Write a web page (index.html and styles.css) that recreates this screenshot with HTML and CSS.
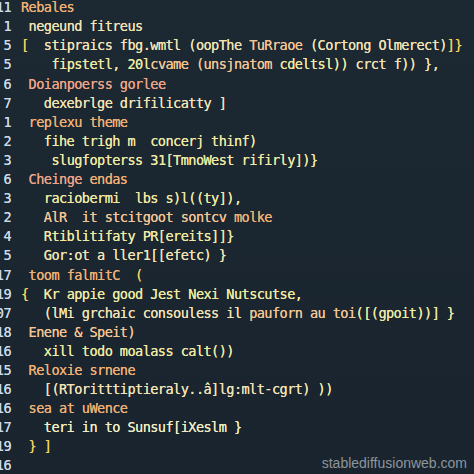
FILE: index.html
```html
<!DOCTYPE html>
<html>
<head>
<meta charset="utf-8">
<link rel="stylesheet" href="styles.css">
</head>
<body>
<div class="editor">
  <div class="line"><span class="ln">11</span><span class="code"><span class="o">Rebales</span></span></div>
  <div class="line"><span class="ln">1</span><span class="code"> <span class="c">negeund fitreus</span></span></div>
  <div class="line"><span class="ln">5</span><span class="code"><span class="b">[</span>  <span class="c">stipraics fbg.wmtl (oopThe </span><span class="p">TuRraoe</span> <span class="c">(Cortong Olmerect)</span><span class="b">]}</span></span></div>
  <div class="line"><span class="ln">5</span><span class="code">    <span class="y">fipstetl, 20l</span><span class="p">cvame (unsjnatom</span> <span class="y">cdeltsl))</span> <span class="c">crct f))</span> <span class="c">},</span></span></div>
  <div class="line"><span class="ln">6</span><span class="code"> <span class="s">Doianpoerss gorlee</span></span></div>
  <div class="line"><span class="ln">7</span><span class="code">   <span class="c">dexebrlge drifilicatty ]</span></span></div>
  <div class="line"><span class="ln">1</span><span class="code"> <span class="o">replexu theme</span></span></div>
  <div class="line"><span class="ln">2</span><span class="code">   <span class="y">fihe trigh m  concerj thinf)</span></span></div>
  <div class="line"><span class="ln">3</span><span class="code">    <span class="y">slugfopterss 31[TmnoWest rifirly])}</span></span></div>
  <div class="line"><span class="ln">6</span><span class="code"> <span class="s">Cheinge</span> <span class="o">endas</span></span></div>
  <div class="line"><span class="ln">3</span><span class="code">   <span class="y">raciobermi  lbs s)l((ty]),</span></span></div>
  <div class="line"><span class="ln">2</span><span class="code">   <span class="p">AlR  it stcitgoot sontcv </span><span class="o">molke</span></span></div>
  <div class="line"><span class="ln">4</span><span class="code">   <span class="y">Rtiblitifaty PR[ereits]]}</span></span></div>
  <div class="line"><span class="ln">5</span><span class="code">   <span class="c">Gor:ot a ller1[[efetc) }</span></span></div>
  <div class="line"><span class="ln">17</span><span class="code"> <span class="o">toom falmitC</span>  <span class="b">(</span></span></div>
  <div class="line"><span class="ln">19</span><span class="code"><span class="b">{</span>  <span class="y">Kr appie good Jest Nexi Nutscutse,</span></span></div>
  <div class="line"><span class="ln">07</span><span class="code">   <span class="c">(lMi grchaic consouless il </span><span class="p">pauforn au toi</span><span class="y">([(gpoit))] }</span></span></div>
  <div class="line"><span class="ln">18</span><span class="code"> <span class="p">Enene &amp; Speit)</span></span></div>
  <div class="line"><span class="ln">16</span><span class="code">   <span class="y">xill todo moalass calt())</span></span></div>
  <div class="line"><span class="ln">15</span><span class="code"> <span class="o">Reloxie srnene</span></span></div>
  <div class="line"><span class="ln">16</span><span class="code">   <span class="c">[(RToritttiptieraly..â]lg:mlt-cgrt)</span> <span class="y">))</span></span></div>
  <div class="line"><span class="ln">16</span><span class="code"> <span class="o">sea at uWence</span></span></div>
  <div class="line"><span class="ln">17</span><span class="code">   <span class="w">teri in to Sunsuf[iXeslm }</span></span></div>
  <div class="line"><span class="ln">19</span><span class="code"> <span class="b">} ]</span></span></div>
  <div class="line"><span class="ln">16</span><span class="code"></span></div>
</div>
<div class="watermark">stablediffusionweb.com</div>
</body>
</html>
```

FILE: styles.css
```css
html, body {
  margin: 0;
  padding: 0;
  width: 474px;
  height: 474px;
  overflow: hidden;
  background: #1a2630;
}

body {
  position: relative;
  background: linear-gradient(180deg, #1c2832 0%, #19242e 100%);
}

.editor {
  display: flex;
  flex-direction: column;
  margin-top: -1.8px;
  font-family: "DejaVu Sans Mono", "Liberation Mono", monospace;
  font-size: 13.6px;
  letter-spacing: -0.58px;
  line-height: 19.1px;
  text-shadow: 0 0 0.5px currentColor;
}

.line {
  display: flex;
  height: 19.1px;
}

.ln {
  flex: 0 0 21px;
  margin-left: -10px;
  text-align: right;
  color: #cddae6;
}

.code {
  margin-left: 10px;
  white-space: pre;
  color: #f1e4b6;
}

.o { color: #f0b074; }
.s { color: #efa486; }
.p { color: #f4c594; }
.c { color: #f2e3b4; }
.y { color: #efeaa2; }
.w { color: #f1eec2; }
.b { color: #eed25c; }

.watermark {
  position: absolute;
  right: 7px;
  bottom: 3px;
  font-family: "Liberation Sans", Arial, sans-serif;
  font-size: 14px;
  color: #8e959c;
  text-shadow: none;
}
```
